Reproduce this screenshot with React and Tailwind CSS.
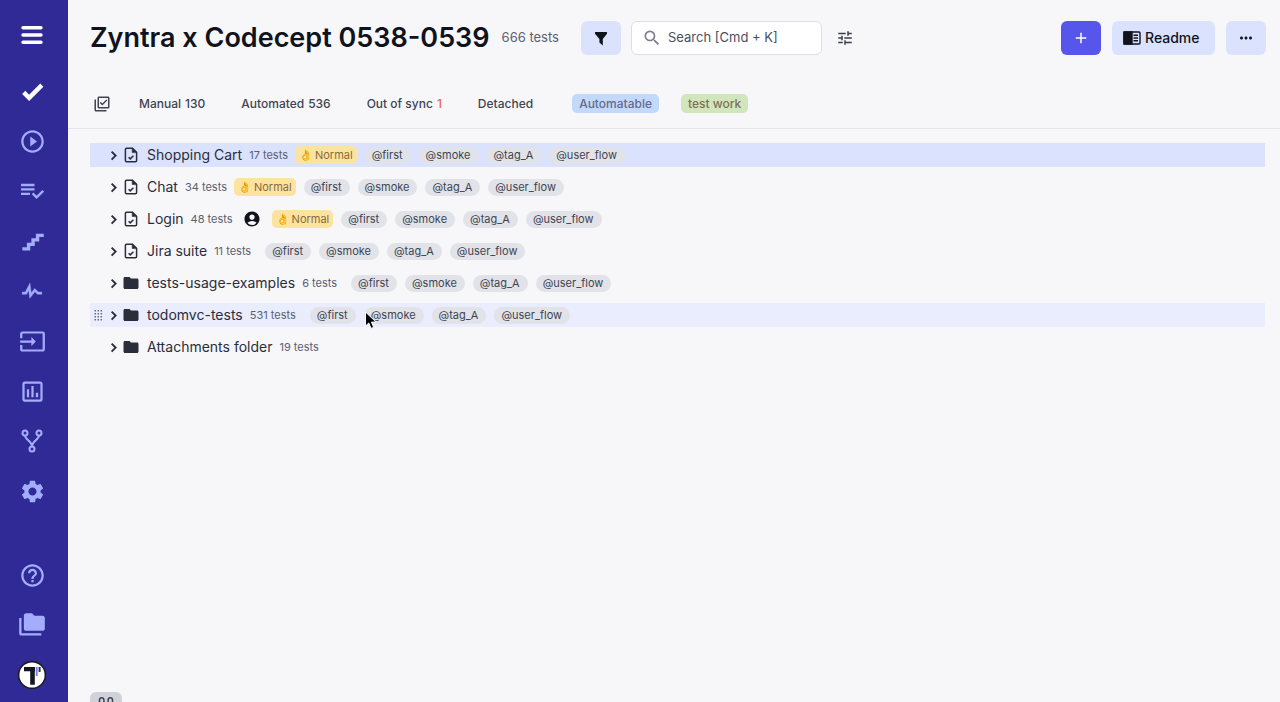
import React, { useState } from 'react'
import {
  MdPlayCircleOutline,
  MdInput,
  MdSettings,
  MdHelpOutline,
  MdFolderCopy,
  MdOutlineLibraryAddCheck,
  MdTune,
  MdSearch,
  MdFolder,
  MdAccountCircle,
  MdAdd,
  MdMoreHoriz,
} from 'react-icons/md'

/* ================= ICONS ================= */
function MenuIcon() {
  return (
    <svg width="22" height="20" viewBox="0 0 22 20" stroke="currentColor" strokeWidth="3.4" strokeLinecap="round">
      <path d="M2 2.8h18M2 10h18M2 17.2h18" />
    </svg>
  )
}

function CheckIcon() {
  return (
    <svg width="27" height="27" viewBox="0 0 24 24" fill="currentColor">
      <path d="M9 20.4L2.8 14.2l2.8-2.8L9 14.8l9.9-9.9 2.8 2.8z" />
    </svg>
  )
}

function PlanIcon() {
  return (
    <svg width="24" height="18" viewBox="0 0 24 18" fill="none" stroke="currentColor" strokeWidth="2.3">
      <path d="M1 3h13.5M1 7.4h13.5M1 11.8h9" />
      <path d="M12.6 11.4l4 4 6.6-6.6" />
    </svg>
  )
}

function StairsIcon() {
  return (
    <svg width="27" height="27" viewBox="0 0 24 24" fill="currentColor">
      <path d="M15 5V9H11V13H7V17H3V20H10V16H14V12H18V8H22V5H15Z" />
    </svg>
  )
}

function PulseIcon() {
  return (
    <svg width="26" height="26" viewBox="0 0 24 24" fill="currentColor" stroke="currentColor" strokeWidth="0.4">
      <path d="M3 13H5.79L10.1 4.79L11.28 13.75L14.5 9.66L17.83 13H21V15H17L14.67 12.67L9.92 18.73L8.94 11.31L7 15H3V13Z" />
    </svg>
  )
}

function ChartIcon() {
  return (
    <svg width="27" height="27" viewBox="0 0 24 24" fill="currentColor">
      <path d="M9 17H7V10H9V17M13 17H11V7H13V17M17 17H15V13H17V17M19 19H5V5H19V19.1M19 3H5C3.9 3 3 3.9 3 5V19C3 20.1 3.9 21 5 21H19C20.1 21 21 20.1 21 19V5C21 3.9 20.1 3 19 3Z" />
    </svg>
  )
}

function BranchIcon() {
  return (
    <svg width="22" height="24" viewBox="0 0 22 24" fill="none" stroke="currentColor" strokeWidth="2">
      <circle cx="4" cy="4" r="2.5" />
      <circle cx="18" cy="4" r="2.5" />
      <circle cx="11" cy="20" r="2.5" />
      <path d="M4 6.5c0 4 7 6 7 11M18 6.5c0 4-7 6-7 11" />
    </svg>
  )
}

function FilterIcon() {
  return (
    <svg width="14" height="15" viewBox="0 0 14 15" fill="currentColor">
      <path d="M1 1h12v1.8L8.8 8v6.4L5.4 11.6V8L1 2.8z" />
    </svg>
  )
}

function ReadmeIcon() {
  return (
    <svg width="18" height="14" viewBox="0 0 18 14" fill="none" stroke="currentColor" strokeWidth="1.4">
      <rect x="1" y="1" width="16" height="12" rx="1" />
      <path d="M1 1h8v12H1z" fill="currentColor" />
      <path d="M10.5 4.3H15M10.5 7H15M10.5 9.7H15" />
    </svg>
  )
}

function ChevronIcon() {
  return (
    <svg width="8" height="12" viewBox="0 0 8 12" fill="none" stroke="currentColor" strokeWidth="1.9">
      <path d="M1.6 2.6L5.6 6.6L1.6 10.6" />
    </svg>
  )
}

function FileIcon() {
  return (
    <svg width="14" height="16" viewBox="0 0 14 16" fill="none" stroke="currentColor" strokeWidth="1.5">
      <path d="M8.5 1.2H2.6c-.7 0-1.2.5-1.2 1.2v11.2c0 .7.5 1.2 1.2 1.2h8.8c.7 0 1.2-.5 1.2-1.2V5.3z" />
      <path d="M8.2 1v4.6h4.6z" fill="currentColor" strokeWidth="0.6" />
      <path d="M4.6 10.2l1.7 1.7 3.1-3.1" />
    </svg>
  )
}

function GripIcon() {
  return (
    <svg width="9" height="12" viewBox="0 0 9 12" fill="currentColor">
      {[0, 3, 6].map((x) =>
        [0, 3, 6, 9].map((y) => <rect key={`${x}-${y}`} x={x + 0.5} y={y + 1} width="1.5" height="1.5" />)
      )}
    </svg>
  )
}

function LogoIcon() {
  return (
    <svg width="30" height="30" viewBox="0 0 30 30">
      <circle cx="15" cy="15" r="13.4" fill="#fff" stroke="#1c1c24" strokeWidth="1.6" />
      <path d="M7 7h11v4.2h-.2v13.6h-4.6V11.2H7z" fill="#17181f" />
      <path d="M18.8 7h1.8v9h-1.8z" fill="#6f7bf0" />
      <path d="M21.6 7h2v5h-2z" fill="#33343d" />
    </svg>
  )
}

function CursorIcon() {
  return (
    <svg width="14" height="20" viewBox="0 0 14 20" className="absolute left-0 top-1">
      <path d="M1.5 1v14l3.3-3 2.3 5.4 2.6-1.1-2.3-5.2H12z" fill="#000" stroke="#fff" strokeWidth="1" />
    </svg>
  )
}

/* ================= DATA ================= */
const navItems = [
  { label: 'Tests', icon: <CheckIcon />, active: true },
  { label: 'Runs', icon: <MdPlayCircleOutline size={27} /> },
  { label: 'Plans', icon: <PlanIcon /> },
  { label: 'Steps', icon: <StairsIcon /> },
  { label: 'Pulse', icon: <PulseIcon /> },
  { label: 'Imports', icon: <MdInput size={27} /> },
  { label: 'Analytics', icon: <ChartIcon /> },
  { label: 'Branches', icon: <BranchIcon /> },
  { label: 'Settings', icon: <MdSettings size={27} /> },
]

const tabs = [
  { label: 'Manual', count: 130 },
  { label: 'Automated', count: 536 },
  { label: 'Out of sync', count: 1, alert: true },
  { label: 'Detached' },
]

const tags = ['@first', '@smoke', '@tag_A', '@user_flow']

const suites = [
  { name: 'Shopping Cart', count: 17, type: 'file', priority: true, tags, state: 'selected' },
  { name: 'Chat', count: 34, type: 'file', priority: true, tags },
  { name: 'Login', count: 48, type: 'file', priority: true, assigned: true, tags },
  { name: 'Jira suite', count: 11, type: 'file', tags },
  { name: 'tests-usage-examples', count: 6, type: 'folder', tags },
  { name: 'todomvc-tests', count: 531, type: 'folder', tags, state: 'hover' },
  { name: 'Attachments folder', count: 19, type: 'folder', tags: [] },
]

const rowColors = {
  selected: 'bg-[#dbe2fe]',
  hover: 'bg-[#e9edfd]',
}

/* ================= PARTS ================= */
function Sidebar() {
  return (
    <aside className="flex w-[68px] shrink-0 flex-col bg-[#302a97] pr-1 pt-[21px] text-[#a3adfb]">
      <button aria-label="Menu" className="flex h-7 items-center justify-center text-white">
        <MenuIcon />
      </button>
      <nav className="mt-[17px] flex flex-col">
        {navItems.map((n) => (
          <a
            key={n.label}
            href="#"
            aria-label={n.label}
            className={`flex h-[50px] items-center justify-center ${n.active ? 'text-white' : ''}`}
          >
            {n.icon}
          </a>
        ))}
      </nav>
      <div className="mt-auto flex flex-col pb-[2px]">
        <a href="#" aria-label="Help" className="flex h-[50px] items-center justify-center">
          <MdHelpOutline size={27} />
        </a>
        <a href="#" aria-label="Projects" className="flex h-[50px] items-center justify-center">
          <MdFolderCopy size={28} />
        </a>
        <a href="#" aria-label="Account" className="flex h-[50px] items-center justify-center">
          <LogoIcon />
        </a>
      </div>
    </aside>
  )
}

function Header() {
  const [query, setQuery] = useState('')

  return (
    <header className="flex items-center pl-[22px] pr-[14px] pt-[21px]">
      <h1 className="text-[27px] font-semibold leading-[34px] text-[#10131c]">Zyntra x Codecept 0538-0539</h1>
      <span className="ml-3 text-[13px] text-[#5b6070]">666 tests</span>
      <button
        aria-label="Filter"
        className="ml-[22px] flex h-[34px] w-10 items-center justify-center rounded-md bg-[#dbe2fe] text-[#10131c]"
      >
        <FilterIcon />
      </button>
      <label className="ml-2.5 flex h-[34px] w-[191px] items-center gap-1.5 rounded-md border border-[#dcdee5] bg-white pl-2.5 text-[#7b7f8c]">
        <MdSearch size={20} className="shrink-0" />
        <input
          aria-label="Search"
          value={query}
          onChange={(e) => setQuery(e.target.value)}
          placeholder="Search [Cmd + K]"
          className="w-full min-w-0 bg-transparent text-[13px] text-[#4b4f5e] outline-none placeholder:text-[#4b4f5e]"
        />
      </label>
      <button aria-label="View options" className="ml-3.5 text-[#3b3f4e]">
        <MdTune size={18} />
      </button>

      <div className="ml-auto flex gap-[11px]">
        <button
          aria-label="Add"
          className="flex h-[34px] w-10 items-center justify-center rounded-md bg-[#5655ec] text-white"
        >
          <MdAdd size={18} />
        </button>
        <button className="flex h-[34px] w-[103px] items-center gap-1 rounded-md bg-[#dbe2fe] pl-[11px] text-sm font-medium text-[#10131c]">
          <ReadmeIcon />
          Readme
        </button>
        <button
          aria-label="More"
          className="flex h-[34px] w-10 items-center justify-center rounded-md bg-[#dbe2fe] text-[#10131c]"
        >
          <MdMoreHoriz size={18} />
        </button>
      </div>
    </header>
  )
}

function Tabs() {
  return (
    <div className="mt-6 flex h-[50px] items-center border-b border-[#e3e5ea] pl-[25px] text-xs font-medium text-[#3f4453]">
      <button aria-label="Select all" className="mr-7">
        <MdOutlineLibraryAddCheck size={18} />
      </button>
      <div className="flex items-center gap-9">
        {tabs.map((t) => (
          <a key={t.label} href="#">
            {t.label}
            {t.count && <span className={`ml-1 ${t.alert ? 'text-[#e8694f]' : ''}`}>{t.count}</span>}
          </a>
        ))}
      </div>
      <div className="ml-[39px] flex items-center gap-[22px]">
        <a href="#" className="rounded-[5px] bg-[#c3d9fb] px-[7px] leading-[19px] text-[#66698a]">
          Automatable
        </a>
        <a href="#" className="rounded-[5px] bg-[#d2e6bd] px-[7px] leading-[19px] text-[#7c7155]">
          test work
        </a>
      </div>
    </div>
  )
}

function Suite({ suite }) {
  const hovered = suite.state === 'hover'

  return (
    <li className={`flex h-6 items-center text-[#2a2e3b] ${rowColors[suite.state] || ''}`}>
      <span className="flex w-4 justify-center text-[#6b6f7d]">{hovered && <GripIcon />}</span>
      <button aria-label={`Expand ${suite.name}`} className="flex w-[15px] justify-center">
        <ChevronIcon />
      </button>
      <span className="flex w-5 justify-center">
        {suite.type === 'file' ? <FileIcon /> : <MdFolder size={18} />}
      </span>
      <a href="#" className="ml-1.5 text-sm">
        {suite.name}
      </a>
      <span className="ml-[7px] text-[11px] text-[#5b6070]">{suite.count} tests</span>
      {suite.assigned && <MdAccountCircle size={18} className="ml-2.5 mr-1 text-[#10131c]" />}
      {suite.priority && (
        <span className="ml-[7px] flex h-[18px] items-center gap-0.5 rounded-[5px] bg-[#fde3a0] px-1 text-[11px] text-[#8a6a3c]">
          <span className="text-[#e8a33a]">👌</span>
          Normal
        </span>
      )}
      <div className={`flex gap-2 ${suite.priority ? 'ml-2' : 'ml-3.5'}`}>
        {suite.tags.map((t) => (
          <span
            key={t}
            className="relative rounded-full bg-[#e1e3e8] pl-[7px] pr-2 text-[11px] leading-[17px] text-[#3f4453]"
          >
            {t}
            {hovered && t === '@smoke' && <CursorIcon />}
          </span>
        ))}
      </div>
    </li>
  )
}

export default function App() {
  return (
    <div className="flex h-screen overflow-hidden bg-[#f7f7fa] font-['Inter',sans-serif]">
      <Sidebar />
      <main className="flex min-w-0 flex-1 flex-col">
        <Header />
        <Tabs />
        <ul className="mt-3.5 flex flex-col gap-2 pl-[22px] pr-[15px]">
          {suites.map((s) => (
            <Suite key={s.name} suite={s} />
          ))}
        </ul>
        <button
          aria-label="Preview"
          className="-mb-3.5 ml-[22px] mt-auto flex h-6 w-8 items-start justify-center rounded-md bg-[#d0d2d9] pt-1 text-[#3f4453]"
        >
          <svg width="16" height="14" viewBox="0 0 16 14" fill="none" stroke="currentColor" strokeWidth="1.5">
            <path d="M1.5 8V4a2.2 2.2 0 0 1 4.4 0v4M10.1 8V4a2.2 2.2 0 0 1 4.4 0v4" />
          </svg>
        </button>
      </main>
    </div>
  )
}
